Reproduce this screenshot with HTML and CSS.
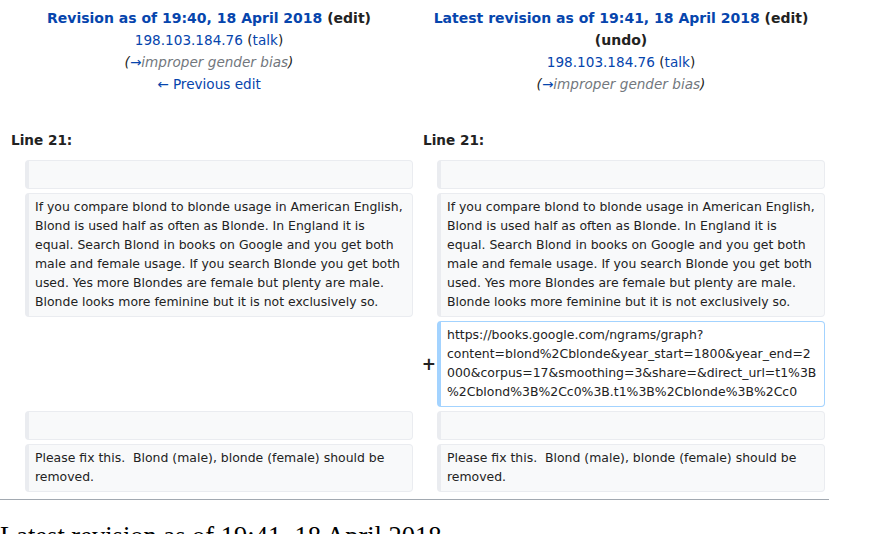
FILE: index.html
```html
<!DOCTYPE html>
<html lang="en">
<head>
<meta charset="utf-8">
<title>Difference between revisions</title>
<link rel="stylesheet" href="styles.css">
</head>
<body>
<div class="page">
  <table class="diff">
    <colgroup>
      <col class="col-marker"><col class="col-content"><col class="col-marker"><col class="col-content">
    </colgroup>
    <tbody>
      <tr>
        <td colspan="2" class="title">
          <div class="title-main"><a class="link" href="#">Revision as of 19:40, 18 April 2018</a> <span class="dark">(edit)</span></div>
          <div><a class="link" href="#">198.103.184.76</a> <span class="dark">(<a class="link" href="#">talk</a>)</span></div>
          <div class="comment">(<a class="link" href="#">→</a><span class="autocomment">improper gender bias</span>)</div>
          <div><a class="link" href="#">← Previous edit</a></div>
        </td>
        <td colspan="2" class="title">
          <div class="title-main"><a class="link" href="#">Latest revision as of 19:41, 18 April 2018</a> <span class="dark">(edit)</span></div>
          <div class="title-main"><span class="dark">(undo)</span></div>
          <div><a class="link" href="#">198.103.184.76</a> <span class="dark">(<a class="link" href="#">talk</a>)</span></div>
          <div class="comment">(<a class="link" href="#">→</a><span class="autocomment">improper gender bias</span>)</div>
        </td>
      </tr>
      <tr class="spacer"><td colspan="4"></td></tr>
      <tr>
        <td colspan="2" class="lineno">Line 21:</td>
        <td colspan="2" class="lineno">Line 21:</td>
      </tr>
      <tr>
        <td class="marker"></td>
        <td class="context"><div><br></div></td>
        <td class="marker"></td>
        <td class="context"><div><br></div></td>
      </tr>
      <tr>
        <td class="marker"></td>
        <td class="context"><div>If you compare blond to blonde usage in American English, Blond is used half as often as Blonde. In England it is equal. Search Blond in books on Google and you get both male and female usage. If you search Blonde you get both used. Yes more Blondes are female but plenty are male. Blonde looks more feminine but it is not exclusively so.</div></td>
        <td class="marker"></td>
        <td class="context"><div>If you compare blond to blonde usage in American English, Blond is used half as often as Blonde. In England it is equal. Search Blond in books on Google and you get both male and female usage. If you search Blonde you get both used. Yes more Blondes are female but plenty are male. Blonde looks more feminine but it is not exclusively so.</div></td>
      </tr>
      <tr>
        <td colspan="2" class="empty"></td>
        <td class="marker"><span class="plus">+</span></td>
        <td class="added"><div>https://books.google.com/ngrams/graph?content=blond%2Cblonde&amp;year_start=1800&amp;year_end=2000&amp;corpus=17&amp;smoothing=3&amp;share=&amp;direct_url=t1%3B%2Cblond%3B%2Cc0%3B.t1%3B%2Cblonde%3B%2Cc0</div></td>
      </tr>
      <tr>
        <td class="marker"></td>
        <td class="context"><div><br></div></td>
        <td class="marker"></td>
        <td class="context"><div><br></div></td>
      </tr>
      <tr>
        <td class="marker"></td>
        <td class="context"><div>Please fix this.  Blond (male), blonde (female) should be removed.</div></td>
        <td class="marker"></td>
        <td class="context"><div>Please fix this.  Blond (male), blonde (female) should be removed.</div></td>
      </tr>
    </tbody>
  </table>
  <hr class="diff-hr">
  <h2 class="current-title">Latest revision as of 19:41, 18 April 2018</h2>
</div>
</body>
</html>
```

FILE: styles.css
```css
html, body {
  margin: 0;
  padding: 0;
  background: #ffffff;
}

body {
  font-family: "DejaVu Sans", sans-serif;
  color: #222222;
}

.page {
  width: 829px;
  padding-top: 3px;
}

.diff {
  width: 828px;
  margin-left: 1px;
  table-layout: fixed;
  border-collapse: separate;
  border-spacing: 4px;
  font-size: 13.6px;
  line-height: 22px;
}

.col-marker {
  width: 16px;
}

.col-content {
  width: 388px;
}

.diff td {
  padding: 0;
}

.diff td.title {
  text-align: center;
  vertical-align: top;
}

.title-main {
  font-weight: bold;
  font-size: 14px;
}

.link {
  color: #0645ad;
  text-decoration: none;
}

.dark {
  color: #222222;
}

.comment {
  font-style: italic;
  color: #222222;
}

.autocomment {
  color: #72777d;
}

.spacer td {
  height: 26px;
}

.diff td.lineno {
  font-weight: bold;
  padding: 0 6px 5px 6px;
  text-align: left;
}

.diff td.context,
.diff td.added {
  font-size: 12.45px;
  line-height: 19px;
  vertical-align: top;
  white-space: pre-wrap;
  overflow-wrap: break-word;
  word-wrap: break-word;
  border-style: solid;
  border-width: 1px 1px 1px 4px;
  border-radius: 4px;
  padding: 3px 6px 5px 6px;
}

.diff td.context {
  background: #f8f9fa;
  border-color: #eaecf0;
  color: #222222;
}

.diff td.added {
  background: #ffffff;
  border-color: #a3d3ff;
}

.diff td.marker {
  text-align: right;
  vertical-align: middle;
  font-weight: bold;
  font-size: 17px;
  line-height: 1.2;
}

.plus {
  margin-right: -3px;
}

.diff-hr {
  height: 1px;
  border: 0;
  background: #a2a9b1;
  margin: 3px 0 21px 0;
}

.current-title {
  font-family: "Liberation Serif", serif;
  font-weight: normal;
  font-size: 26.5px;
  margin: 0;
  color: #000000;
}
```
